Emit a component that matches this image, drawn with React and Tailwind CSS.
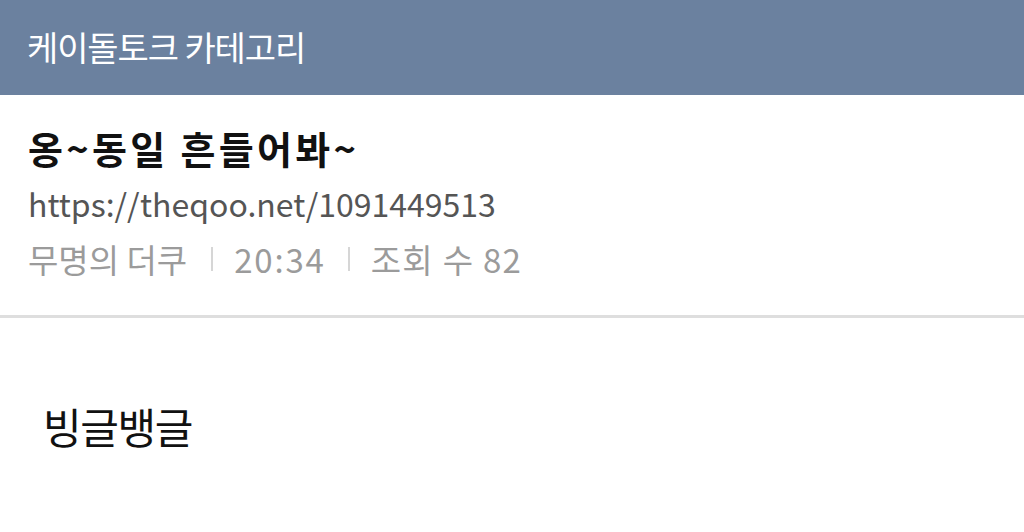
export default function App() {
  const f = { fontFamily: '"Noto Sans CJK KR", "Noto Sans", sans-serif' };
  return (
    <div className="w-[1024px] h-[532px] bg-white overflow-hidden" style={f}>
      <div className="h-[95px] bg-[#6b819f] flex items-center pl-[27px]">
        <span className="text-[34px] text-white leading-none tracking-[-1.1px] -mt-[2px]">케이돌토크 카테고리</span>
      </div>
      <div className="pl-[28px] pt-[28px] pb-[34px] border-b-[3px] border-[#dedede]">
        <div className="text-[38px] font-bold text-[#111] leading-[50px] tracking-[3.3px]">옹~동일 흔들어봐~</div>
        <div className="text-[32px] text-[#555] leading-[44px] mt-[8px]">https://theqoo.net/1091449513</div>
        <div className="text-[33px] text-[#9b9b9b] leading-[44px] mt-[12px] flex items-center">
          <span>무명의 더쿠</span>
          <span className="w-[2px] h-[24px] bg-[#d6d6d6] ml-[24px] mr-[21px]"></span>
          <span className="tracking-[1.8px]">20:34</span>
          <span className="w-[2px] h-[24px] bg-[#d6d6d6] ml-[22px] mr-[21px]"></span>
          <span className="tracking-[1.3px]">조회 수 82</span>
        </div>
      </div>
      <div className="pl-[43px] pt-[80px] text-[42px] text-[#111] leading-[56px] tracking-[-1.4px]">빙글뱅글</div>
    </div>
  );
}
